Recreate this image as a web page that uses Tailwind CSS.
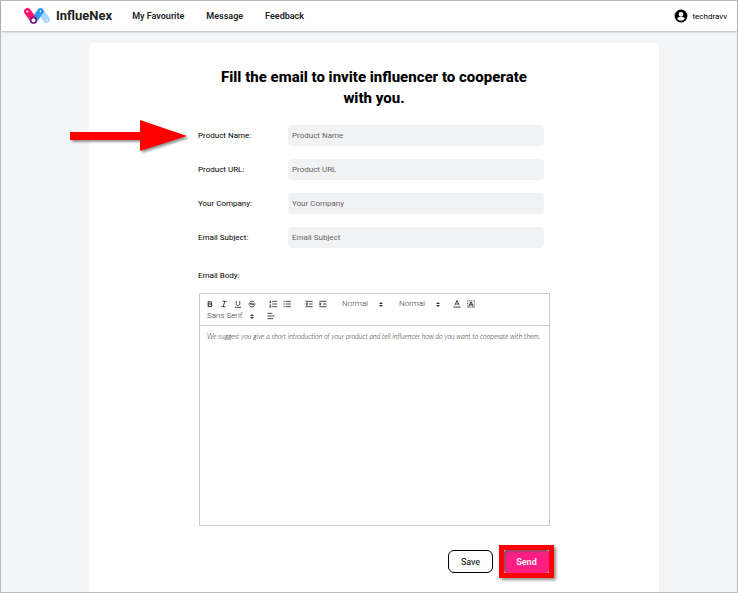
<!DOCTYPE html>
<html lang="en">
<head>
    <meta charset="UTF-8">
    <meta name="viewport" content="width=device-width, initial-scale=1.0">
    <title>InflueNex - Invite influencer</title>
    <script src="https://cdn.jsdelivr.net/npm/@tailwindcss/browser@4"></script>
</head>
<body class="bg-[#f4f5f7] font-['Roboto',sans-serif] text-black">
    <div class="min-h-screen flex flex-col border border-[#bbbbbb]">
        <header class="h-[30px] shrink-0 flex items-center bg-white pl-[22px] pr-[10px] shadow-[0_1px_2px_rgba(0,0,0,0.25)]">
            <a href="#" class="flex items-center gap-[5px]">
                <svg class="w-7 h-[18px]" viewBox="0 0 28 18" fill="none" stroke-linecap="round" aria-hidden="true">
                    <path d="M17.500 4.500L23.500 12.500" stroke="#a9d4fb" stroke-width="7"/>
                    <path d="M17.500 4.500L11 13" stroke="#2c9ff0" stroke-width="6.500"/>
                    <path d="M4.500 4.500L10.500 13" stroke="#ff1466" stroke-width="7"/>
                    <circle cx="10.500" cy="13.200" r="2.800" fill="#fff" stroke="#6a1b8a" stroke-width="1.600"/>
                    <circle cx="4.300" cy="4.500" r="1.100" fill="#fff"/>
                    <circle cx="17.500" cy="4.300" r="1.500" fill="#fff" stroke="#1b5fc0" stroke-width="0.800"/>
                    <circle cx="23.800" cy="13" r="1" fill="#e4f2ff"/>
                </svg>
                <span class="text-[13px] leading-4 font-bold text-[#222222]">InflueNex</span>
            </a>
            <nav class="ml-5 flex items-center gap-[22px] text-[9px] leading-4 font-semibold text-[#222222]">
                <a href="#">My Favourite</a>
                <a href="#">Message</a>
                <a href="#">Feedback</a>
            </nav>
            <a href="#" class="ml-auto flex items-center gap-1 text-[8px] leading-4">
                <svg class="w-3.5 h-3.5" viewBox="0 0 24 24" fill="#000" aria-hidden="true">
                    <path d="M12 1a11 11 0 1 0 0 22 11 11 0 0 0 0-22zm0 4a4 4 0 1 1 0 8 4 4 0 0 1 0-8zm0 15a8 8 0 0 1-6.500-3.500c0-2.200 4.300-3.300 6.500-3.300s6.500 1.100 6.500 3.300A8 8 0 0 1 12 20z"/>
                </svg>
                <span class="pt-0.5">techdravv</span>
            </a>
        </header>

        <div class="flex-1 flex justify-center pl-2.5 pt-3">
            <main class="w-full max-w-[570px] flex flex-col bg-white rounded-t px-[109px] pt-6 pb-3.5">
                <h1 class="px-4 text-center text-[15px] leading-[21px] font-extrabold">Fill the email to invite influencer to cooperate with you.</h1>

                <form class="mt-4">
                    <div class="flex flex-col gap-[13px] pr-1.5 text-[8px]">
                        <div class="relative flex items-center">
                            <svg class="absolute right-full -top-[5px] mr-2 w-[122px] h-9 drop-shadow-[2px_2px_1px_rgba(0,0,0,0.4)]" viewBox="0 0 122 36" aria-hidden="true">
                                <path d="M2 12H72V0L119 16L72 31V20H2z" fill="#ff0000"/>
                            </svg>
                            <label for="productName" class="w-[90px] shrink-0">Product Name:</label>
                            <input type="text" id="productName" placeholder="Product Name" class="flex-1 min-w-0 h-[21px] px-1 rounded bg-[#f1f2f4] placeholder:text-[#666666]">
                        </div>
                        <div class="flex items-center">
                            <label for="productUrl" class="w-[90px] shrink-0">Product URL:</label>
                            <input type="text" id="productUrl" placeholder="Product URL" class="flex-1 min-w-0 h-[21px] px-1 rounded bg-[#f1f2f4] placeholder:text-[#666666]">
                        </div>
                        <div class="flex items-center">
                            <label for="company" class="w-[90px] shrink-0">Your Company:</label>
                            <input type="text" id="company" placeholder="Your Company" class="flex-1 min-w-0 h-[21px] px-1 rounded bg-[#f1f2f4] placeholder:text-[#666666]">
                        </div>
                        <div class="flex items-center">
                            <label for="subject" class="w-[90px] shrink-0">Email Subject:</label>
                            <input type="text" id="subject" placeholder="Email Subject" class="flex-1 min-w-0 h-[21px] px-1 rounded bg-[#f1f2f4] placeholder:text-[#666666]">
                        </div>
                    </div>

                    <label for="emailBody" class="block mt-[22px] text-[8px] leading-3">Email Body:</label>

                    <div class="mt-[11px] ml-px border border-[#cccccc]">
                        <!-- Toolbar -->
                        <div class="flex flex-wrap items-center h-8 pl-[3px] pt-1 pb-[3px] border-b border-[#cccccc] text-[8px] font-light text-[#333333]">
                            <div class="flex h-3 mr-[7px]">
                                <button type="button" aria-label="Bold" class="w-3.5 px-[2px]">
                                    <svg class="w-2 h-2 ml-px" viewBox="0 0 18 18" fill="none" stroke="#333" stroke-width="2.500"><path d="M5 4h5a2.500 2.500 0 0 1 0 5H5zM5 9h5.500a2.500 2.500 0 0 1 0 5.500H5zM5 3v12"/></svg>
                                </button>
                                <button type="button" aria-label="Italic" class="w-3.5 px-[2px]">
                                    <svg class="w-2 h-2 ml-px" viewBox="0 0 18 18" fill="none" stroke="#333" stroke-width="2"><path d="M6 3h9M3 15h9M11 3L7 15"/></svg>
                                </button>
                                <button type="button" aria-label="Underline" class="w-3.5 px-[2px]">
                                    <svg class="w-2 h-2 ml-px" viewBox="0 0 18 18" fill="none" stroke="#333" stroke-width="2"><path d="M5 2v6.500c0 5 8 5 8 0V2M2 16.500h14"/></svg>
                                </button>
                                <button type="button" aria-label="Strike" class="w-3.5 px-[2px]">
                                    <svg class="w-2 h-2 ml-px" viewBox="0 0 18 18" fill="none" stroke="#333" stroke-width="2"><path d="M14 5c-1-3-10-3-10 1 0 3 10 3 10 6.500 0 4-10 3.500-11 0M1 9h16"/></svg>
                                </button>
                            </div>
                            <div class="flex h-3 mr-[8px]">
                                <button type="button" aria-label="Ordered list" class="w-3.5 px-[2px]">
                                    <svg class="w-2 h-2 ml-px" viewBox="0 0 18 18" fill="none" stroke="#333" stroke-width="2"><path d="M7 3h11M7 9h11M7 15h11M3 1v5M1 6h4M1 11h3v2l-3 3h4"/></svg>
                                </button>
                                <button type="button" aria-label="Bullet list" class="w-3.5 px-[2px]">
                                    <svg class="w-2 h-2 ml-px" viewBox="0 0 18 18" fill="none" stroke="#333" stroke-width="2"><path d="M6 3h12M6 9h12M6 15h12M1 3h3M1 9h3M1 15h3"/></svg>
                                </button>
                            </div>
                            <div class="flex h-3 mr-[9px]">
                                <button type="button" aria-label="Outdent" class="w-3.5 px-[2px]">
                                    <svg class="w-2 h-2 ml-px" viewBox="0 0 18 18" fill="none" stroke="#333" stroke-width="2"><path d="M1 3h16M9 9h8M1 15h16M5 6v6L2 9z"/></svg>
                                </button>
                                <button type="button" aria-label="Indent" class="w-3.5 px-[2px]">
                                    <svg class="w-2 h-2 ml-px" viewBox="0 0 18 18" fill="none" stroke="#333" stroke-width="2"><path d="M1 3h16M9 9h8M1 15h16M2 6v6l3-3z"/></svg>
                                </button>
                            </div>
                            <div class="relative flex items-center h-3 w-[57px]">
                                <select aria-label="Size" class="w-full h-3 pl-[3px] appearance-none"><option>Normal</option></select>
                                <svg class="absolute right-[13px] w-1 h-[5px] pointer-events-none" viewBox="0 0 4 5" fill="#333"><path d="M0 2L2 0L4 2zM0 3L2 5L4 3z"/></svg>
                            </div>
                            <div class="relative flex items-center h-3 w-[54px]">
                                <select aria-label="Heading" class="w-full h-3 pl-[3px] appearance-none"><option>Normal</option></select>
                                <svg class="absolute right-[10px] w-1 h-[5px] pointer-events-none" viewBox="0 0 4 5" fill="#333"><path d="M0 2L2 0L4 2zM0 3L2 5L4 3z"/></svg>
                            </div>
                            <div class="flex h-3">
                                <button type="button" aria-label="Text color" class="w-3.5 px-[2px]">
                                    <svg class="w-2 h-2 ml-px" viewBox="0 0 18 18" fill="none" stroke="#333" stroke-width="2"><path d="M4 12L9 1l5 11M6 9h6M1 16h16"/></svg>
                                </button>
                                <button type="button" aria-label="Background color" class="w-3.5 px-[2px]">
                                    <svg class="w-2 h-2 ml-px" viewBox="0 0 18 18" fill="none" stroke="#333" stroke-width="2"><rect x="1" y="1" width="16" height="16" stroke="#777" fill="#ddd" stroke-dasharray="2 2"/><path d="M4 15L9 4l5 11M6 11h6"/></svg>
                                </button>
                            </div>
                            <div class="basis-full flex items-center h-3">
                                <div class="relative flex items-center h-3 w-[61px]">
                                    <select aria-label="Font" class="w-full h-3 pl-1 appearance-none"><option>Sans Serif</option></select>
                                    <svg class="absolute right-[10px] w-1 h-[5px] pointer-events-none" viewBox="0 0 4 5" fill="#333"><path d="M0 2L2 0L4 2zM0 3L2 5L4 3z"/></svg>
                                </div>
                                <button type="button" aria-label="Align" class="w-3.5 px-[2px]">
                                    <svg class="w-2 h-2 ml-px" viewBox="0 0 18 18" fill="none" stroke="#333" stroke-width="2"><path d="M1 3h11M1 9h16M1 15h13"/></svg>
                                </button>
                            </div>
                        </div>
                        <textarea id="emailBody" placeholder="We suggest you give a short introduction of your product and tell influencer how do you want to cooperate with them." class="block w-full h-[199px] pl-[7px] py-1 resize-none font-['Lato',sans-serif] text-[7px] leading-3 font-light italic placeholder:text-[#222222]"></textarea>
                    </div>

                    <div class="mt-[19px] -mr-1 flex items-center justify-end gap-1.5 text-[9px]">
                        <button type="button" class="w-[45px] h-[23px] pt-0.5 rounded-md border border-black bg-white">Save</button>
                        <div class="border-[5px] border-[#ff0000] bg-[#aaaaaa] shadow-[2px_2px_3px_rgba(0,0,0,0.45)]">
                            <button type="submit" class="block w-[45px] h-[23px] pt-0.5 rounded bg-[#ff1f84] font-semibold text-white shadow-[inset_2px_2px_2px_rgba(120,80,100,0.7)]">Send</button>
                        </div>
                    </div>
                </form>
            </main>
        </div>
    </div>
</body>
</html>
